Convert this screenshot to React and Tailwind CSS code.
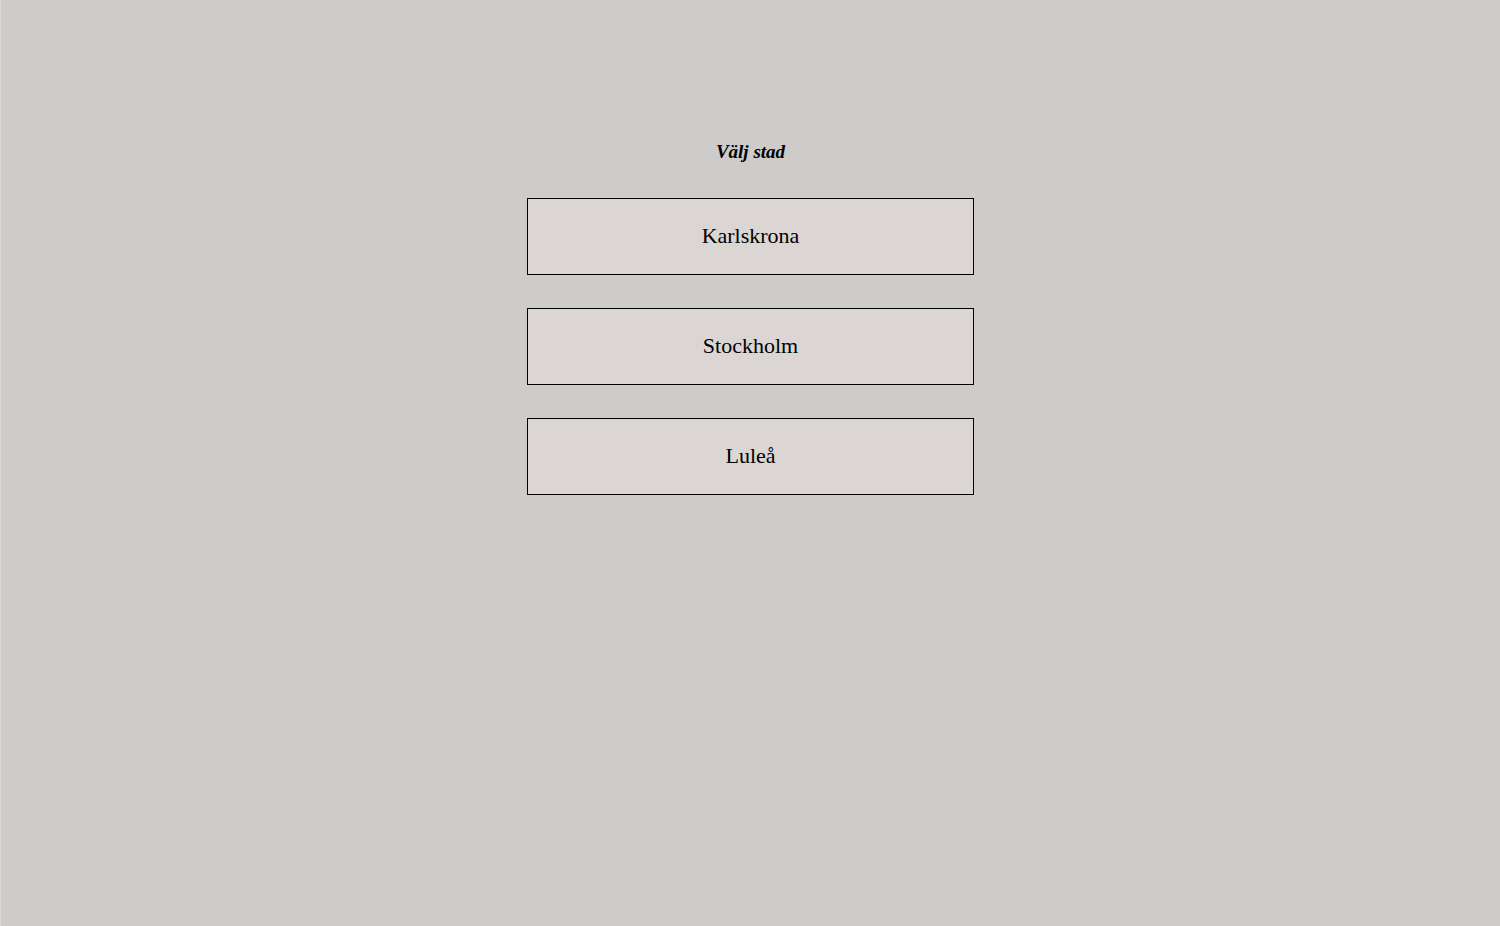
import React from "react";

const cities = ["Karlskrona", "Stockholm", "Luleå"];

const App = () => {
	return (
		<div className="min-h-screen h-[926px] bg-[#cdccca] border-l border-[#dadada] font-['Liberation_Serif',serif] text-black">
			<div className="flex flex-col items-center pt-[140px]">
				<h1 className="text-[19px] leading-[24px] font-bold italic">Välj stad</h1>
				<div className="flex flex-col gap-[33px] mt-[34px]">
					{cities.map((city) => (
						<button
							key={city}
							className="w-[447px] h-[77px] pb-[2px] bg-[#dbd6d3] border border-black text-[22px] flex items-center justify-center"
						>
							{city}
						</button>
					))}
				</div>
			</div>
		</div>
	);
};

export default App;
